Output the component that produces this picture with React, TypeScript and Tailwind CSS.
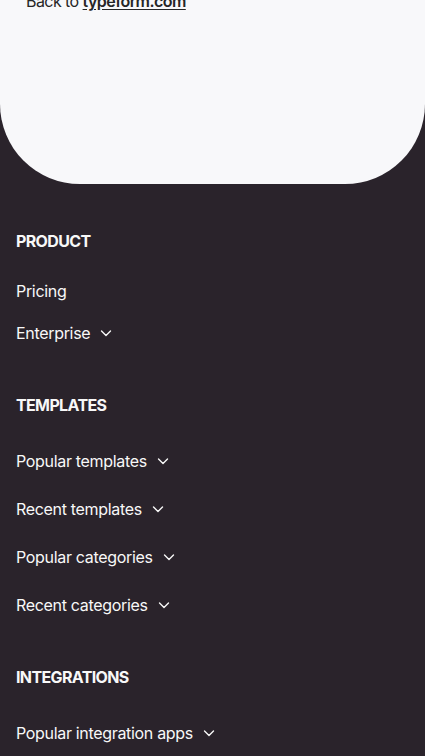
const sections = [
  {
    title: "PRODUCT",
    items: [
      { label: "Pricing", menu: false },
      { label: "Enterprise", menu: true },
    ],
  },
  {
    title: "TEMPLATES",
    items: [
      { label: "Popular templates", menu: true },
      { label: "Recent templates", menu: true },
      { label: "Popular categories", menu: true },
      { label: "Recent categories", menu: true },
    ],
  },
  {
    title: "INTEGRATIONS",
    items: [{ label: "Popular integration apps", menu: true }],
  },
];

function Chevron() {
  return (
    <svg width="12" height="12" viewBox="0 0 12 12" fill="none" className="ml-[10px]">
      <path d="M1.5 4L6 8.5L10.5 4" stroke="currentColor" strokeWidth="1.4" strokeLinecap="round" strokeLinejoin="round" />
    </svg>
  );
}

export default function App() {
  return (
    <div className="min-h-[756px] overflow-hidden bg-[#2a232b] font-['Inter',sans-serif] text-[#f8f8f8]">
      {/* Card end */}
      <div className="-mt-[11px] h-[195px] rounded-b-[80px] bg-[#f8f8fa] pl-[26px] text-[#262627]">
        <p className="text-[16px] leading-6 tracking-[-0.035em]">
          Back to <a className="font-semibold underline underline-offset-2">typeform.com</a>
        </p>
      </div>

      {/* Footer nav */}
      <nav className="flex flex-col gap-9 px-4 pt-[45px]">
        {sections.map((s) => (
          <div key={s.title}>
            <h3 className="mb-5 text-[16px] font-bold leading-6 tracking-[-0.04em]">{s.title}</h3>
            <ul>
              {s.items.map((it) => (
                <li
                  key={it.label}
                  className={
                    it.menu
                      ? "flex h-12 items-center text-[16px] tracking-[-0.02em]"
                      : "flex h-9 items-center text-[16px] tracking-[-0.02em]"
                  }
                >
                  {it.label}
                  {it.menu && <Chevron />}
                </li>
              ))}
            </ul>
          </div>
        ))}
      </nav>
    </div>
  );
}
